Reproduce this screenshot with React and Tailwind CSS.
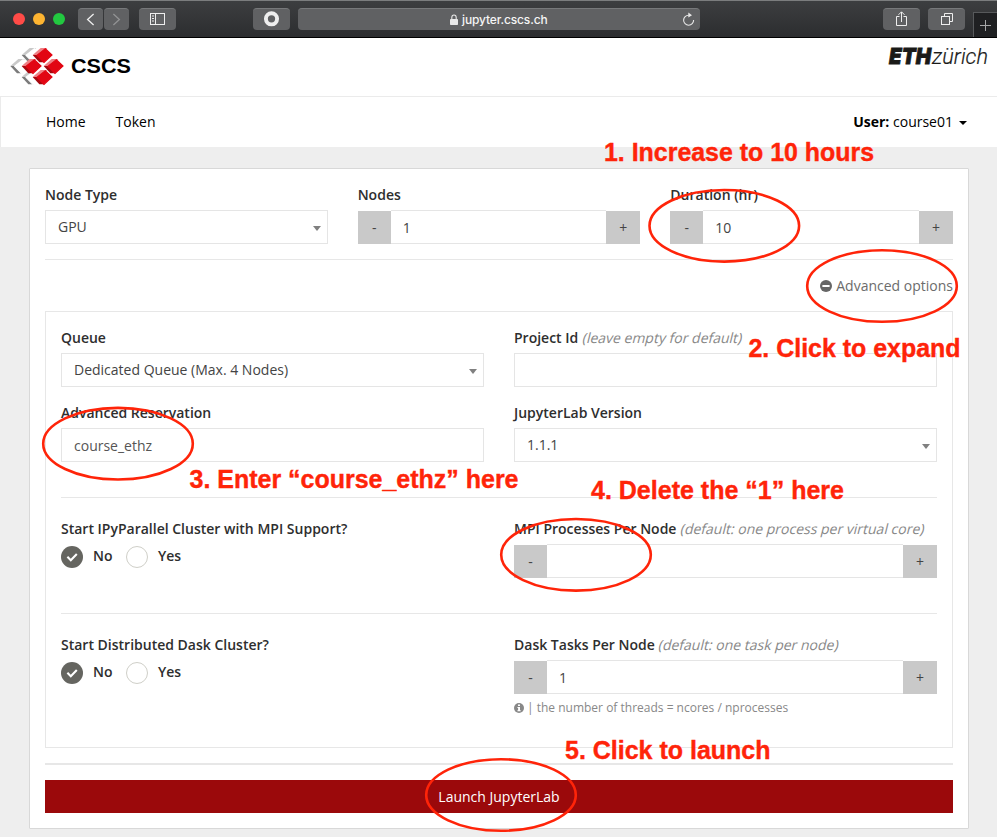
import React from "react";

const RED = "#ff2409";

function ToolButton({ className, children }) {
  return (
    <div className={"flex h-[22px] items-center justify-center rounded-[4px] border-t border-[#77797b] bg-[#606163] " + className}>
      {children}
    </div>
  );
}

function TitleBar() {
  return (
    <div className="flex h-[38px] items-start border-b border-black bg-linear-to-b from-[#3d3f41] to-[#2c2d2f] pt-[8px] shadow-[inset_0_1px_0_#7b7d7e]">
      <div className="ml-[13px] mt-[5px] flex gap-[8px]">
        <div className="size-[12px] rounded-full bg-[#ff4b47]" />
        <div className="size-[12px] rounded-full bg-[#fdb431]" />
        <div className="size-[12px] rounded-full bg-[#22c840]" />
      </div>
      <ToolButton className="ml-[13px] w-[25px]">
        <svg width="25" height="21" fill="none" stroke="#eeeeee" strokeWidth="1.3"><path d="M15.6 5 L9.6 10.5 L15.6 16" /></svg>
      </ToolButton>
      <ToolButton className="ml-px w-[25px]">
        <svg width="25" height="21" fill="none" stroke="#929394" strokeWidth="1.3"><path d="M9.4 5 L15.4 10.5 L9.4 16" /></svg>
      </ToolButton>
      <ToolButton className="ml-[10px] w-[37px]">
        <svg width="37" height="21" fill="none" stroke="#eeeeee"><rect x="11.5" y="4.5" width="14" height="11" /><path d="M16.5 4.5v11M13 7h2M13 9.5h2M13 12h2" /></svg>
      </ToolButton>
      <ToolButton className="ml-[77px] w-[37px]">
        <svg width="37" height="21"><circle cx="18.5" cy="9.8" r="5.6" fill="none" stroke="#eeeeee" strokeWidth="3.9" /></svg>
      </ToolButton>
      <ToolButton className="ml-[8px] w-[402px]">
        <div className="flex w-full items-center">
          <svg className="ml-[152px]" width="8" height="12"><rect y="5" width="8" height="6" rx="0.8" fill="#e8e8e8" /><path d="M1.8 5V3.4a2.2 2.4 0 0 1 4.4 0V5" fill="none" stroke="#e8e8e8" strokeWidth="1.1" /></svg>
          <span className="ml-[4px] font-['Inter',sans-serif] text-[12px] leading-[16px] font-medium tracking-[-0.14px] text-[#f5f5f5]">jupyter.cscs.ch</span>
          <svg className="ml-auto mr-[4px]" width="15" height="16" fill="none" stroke="#e8e8e8" strokeWidth="1.1"><path d="M7.8 3.2A5 5 0 1 0 12.6 8" /><path d="M7.3 0.6 L11 3.2 L7.3 5.6Z" fill="#e8e8e8" stroke="none" /></svg>
        </div>
      </ToolButton>
      <ToolButton className="ml-[183px] w-[37px]">
        <svg width="37" height="21" fill="none" stroke="#eeeeee"><path d="M16.5 7.5h-3v9h10v-9h-3M18.5 13V3M15.5 5.8l3-3 3 3" /></svg>
      </ToolButton>
      <ToolButton className="ml-[8px] w-[37px]">
        <svg width="37" height="21" fill="none" stroke="#eeeeee"><rect x="13.5" y="7.5" width="8" height="8" /><path d="M16.5 7.5v-3h8v8h-3" /></svg>
      </ToolButton>
      <div className="ml-[8px] mt-[4px] h-[25px] w-[24px] border-l border-t border-[#57595b] bg-[#1f2022]">
        <svg width="23" height="24" fill="none" stroke="#a5a6a7"><path d="M6 12.5h11M11.5 7v11" /></svg>
      </div>
    </div>
  );
}

function Cube({ x, y, top, side, face }) {
  return (
    <g transform={`translate(${x} ${y})`}>
      <path d="M0 21 L24 0 H44 L18 21Z" fill={top} />
      <path d="M0 21 H14 L36 43 H20Z" fill={side} />
      <path d="M38 2 L58 21 L34 43 L13 22Z" fill={face} stroke={face} strokeWidth="3.5" />
    </g>
  );
}

function Header() {
  return (
    <header className="flex h-[59px] items-start justify-between border-b border-[#ebebeb] bg-white">
      <svg width="140" height="58">
        <g transform="translate(0 -38) scale(0.33333)">
          <Cube x={65} y={144} top="#c9c9c9" side="#7b7b7b" face="#ffffff" />
          <Cube x={65} y={210} top="#c9c9c9" side="#7b7b7b" face="#ffffff" />
          <Cube x={31} y={177} top="#c9c9c9" side="#7b7b7b" face="#ffffff" />
          <Cube x={98} y={144} top="#ee8085" side="#a5080f" face="#e20613" />
          <Cube x={65} y={177} top="#ee8085" side="#a5080f" face="#e20613" />
          <Cube x={131} y={177} top="#ee8085" side="#a5080f" face="#e20613" />
          <Cube x={98} y={210} top="#ee8085" side="#a5080f" face="#e20613" />
        </g>
        <text x="71" y="34.5" textLength="60" lengthAdjust="spacingAndGlyphs" className="font-['Liberation_Sans',sans-serif] text-[20.5px] font-bold" fill="#000">CSCS</text>
      </svg>
      <svg width="110" height="40">
        <text x="2" y="26" textLength="42" lengthAdjust="spacingAndGlyphs" className="font-['Inter',sans-serif] text-[22px] font-black italic" fill="#1a1a18" stroke="#1a1a18" strokeWidth="0.8">ETH</text>
        <text x="45" y="26" textLength="56" lengthAdjust="spacingAndGlyphs" className="font-['Roboto',sans-serif] text-[22px] font-light italic" fill="#1a1a18" stroke="#1a1a18" strokeWidth="0.2">zürich</text>
      </svg>
    </header>
  );
}

function Nav() {
  return (
    <nav className="flex h-[50px] items-center border-l border-[#ebebeb] bg-white pl-[45px] pr-[30px] text-black">
      <span>Home</span>
      <span className="ml-[30px]">Token</span>
      <span className="ml-auto"><b className="font-bold">User:</b> course01</span>
      <svg className="ml-[6px] mt-[2px]" width="8" height="4"><path d="M0 0h8L4 4Z" fill="#000" /></svg>
    </nav>
  );
}

function Label({ children, hint }) {
  return (
    <div className="mb-[5px] h-[20px] whitespace-nowrap font-semibold text-[#2e2e2e]">
      {children}
      {hint && <> <span className="ml-px inline-block -skew-x-[14deg] font-normal text-[#888888]">{hint}</span></>}
    </div>
  );
}

function Select({ value }) {
  return (
    <div className="flex h-[34px] items-center justify-between border border-[#e5e5e5] pl-[12px] pr-[6px] text-[#444444]">
      <span className="-mt-px">{value}</span>
      <svg className="mt-[3px]" width="8" height="5"><path d="M0 0h8L4 5Z" fill="#808080" /></svg>
    </div>
  );
}

function TextBox({ value }) {
  return <div className="flex h-[34px] items-center border border-[#e5e5e5] pl-[12px] pt-px text-[#555555]">{value}</div>;
}

function Stepper({ value }) {
  return (
    <div className="flex h-[34px] items-end text-[#444444]">
      <div className="flex h-[33px] w-[33px] items-center justify-center bg-[#c9c9c9] pt-px">-</div>
      <div className="flex h-[34px] flex-1 items-center border-y border-[#e5e5e5] pl-[12px] pt-px">{value}</div>
      <div className="flex h-[33px] w-[34px] items-center justify-center bg-[#c9c9c9]">+</div>
    </div>
  );
}

function Radios() {
  return (
    <div className="mt-[7px] flex h-[22px] items-center font-semibold text-[#2e2e2e]">
      <svg width="22" height="22"><circle cx="11" cy="11" r="11" fill="#656560" /><path d="M6.4 10.8 L9.8 14.2 L15.8 8" fill="none" stroke="#fff" strokeWidth="2.1" /></svg>
      <span className="-mt-[3px] ml-[10px] w-[33px]">No</span>
      <div className="size-[22px] rounded-full border border-[#cfcfc8]" />
      <span className="-mt-[3px] ml-[10px]">Yes</span>
    </div>
  );
}

function Rule() {
  return <div className="mt-[35px] mb-[21px] h-px bg-[#e7e7e7]" />;
}

const marks = [
  { cx: 724.3, cy: 225.8, x: 604, y: 160.5, w: 270, text: "1. Increase to 10 hours" },
  { cx: 882, cy: 286, x: 748.5, y: 356.5, w: 212, text: "2. Click to expand" },
  { cx: 118, cy: 443.7, x: 189.5, y: 487.5, w: 329, text: "3. Enter “course_ethz” here" },
  { cx: 576, cy: 554.8, x: 591, y: 498.5, w: 253, text: "4. Delete the “1” here" },
  { cx: 501, cy: 795, x: 565, y: 758.5, w: 205.5, text: "5. Click to launch" },
];

function Annotations() {
  return (
    <svg className="pointer-events-none absolute left-0 top-0" width="997" height="837">
      {marks.map((m) => (
        <g key={m.text}>
          <ellipse cx={m.cx} cy={m.cy} rx="74.8" ry="35.8" fill="none" stroke={RED} strokeWidth="2.6" />
          <text x={m.x} y={m.y} textLength={m.w} lengthAdjust="spacingAndGlyphs" fill={RED} stroke={RED} strokeWidth="0.4" className="font-['Liberation_Sans',sans-serif] text-[25.5px] font-bold">{m.text}</text>
        </g>
      ))}
    </svg>
  );
}

export default function App() {
  return (
    <div className="relative h-[837px] w-[997px] overflow-hidden bg-[#eeeeee] font-['Open_Sans','Noto_Sans',sans-serif] text-[14px] leading-[20px]">
      <TitleBar />
      <Header />
      <Nav />
      <main className="mt-[21px] mr-[28px] ml-[29px] rounded-[1px] border border-[#d8d8d8] bg-white p-[15px] pt-[16px]">
        <div className="grid grid-cols-3 gap-[30px]">
          <div><Label>Node Type</Label><Select value="GPU" /></div>
          <div><Label>Nodes</Label><Stepper value="1" /></div>
          <div><Label>Duration (hr)</Label><Stepper value="10" /></div>
        </div>
        <div className="mt-[15px] h-px bg-[#e7e7e7]" />
        <div className="mt-[16px] mb-[15px] flex h-[20px] items-center justify-end text-[#6c6c6c]">
          <svg className="mr-[4px]" width="12" height="12"><circle cx="6" cy="6" r="6" fill="#666666" /><rect x="2.4" y="5" width="7.2" height="2" fill="#fff" /></svg>
          Advanced options
        </div>
        <section className="h-[437px] border border-[#e7e7e7] px-[15px] pt-[16px]">
          <div className="grid grid-cols-2 gap-x-[30px] gap-y-[16px]">
            <div><Label>Queue</Label><Select value="Dedicated Queue (Max. 4 Nodes)" /></div>
            <div><Label hint="(leave empty for default)">Project Id</Label><TextBox value="" /></div>
            <div><Label>Advanced Reservation</Label><TextBox value="course_ethz" /></div>
            <div><Label>JupyterLab Version</Label><Select value="1.1.1" /></div>
          </div>
          <Rule />
          <div className="grid grid-cols-2 gap-[30px]">
            <div><Label>Start IPyParallel Cluster with MPI Support?</Label><Radios /></div>
            <div><Label hint="(default: one process per virtual core)">MPI Processes Per Node</Label><Stepper value="" /></div>
          </div>
          <Rule />
          <div className="grid grid-cols-2 gap-[30px]">
            <div><Label>Start Distributed Dask Cluster?</Label><Radios /></div>
            <div>
              <Label hint="(default: one task per node)">Dask Tasks Per Node</Label>
              <Stepper value="1" />
              <div className="mt-[4px] flex h-[20px] items-center text-[12px] text-[#888888]">
                <svg className="mr-[3px]" width="10" height="10"><circle cx="5" cy="5" r="5" fill="#888888" /><path d="M4 1.6h2v1.5H4zM3.4 4h2.6v3.2h.7v1.1H3.4V7.2h.7V5h-.7z" fill="#fff" /></svg>
                | the number of threads = ncores / nprocesses
              </div>
            </div>
          </div>
        </section>
        <div className="my-[15px] h-[2px] bg-[#e7e7e7]" />
        <button className="flex h-[33px] w-full items-center justify-center bg-[#9b090b] pt-px font-medium text-white">Launch JupyterLab</button>
      </main>
      <Annotations />
    </div>
  );
}
